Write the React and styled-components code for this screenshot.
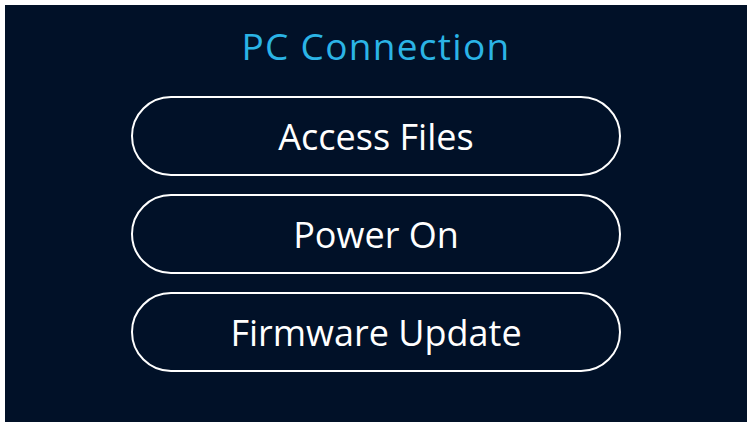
import styled, { createGlobalStyle } from "styled-components";

const GlobalStyle = createGlobalStyle`
  html, body {
    margin: 0;
    padding: 0;
    background: #ffffff;
  }
`;

const Page = styled.div`
  width: 754px;
  height: 428px;
  padding: 5px 7px 6px 5px;
  box-sizing: border-box;
`;

const Screen = styled.section`
  height: 100%;
  background: #011128;
  display: flex;
  flex-direction: column;
  align-items: center;
  font-family: "Open Sans", "Noto Sans", sans-serif;
`;

const Title = styled.h1`
  margin: 19px 0 0;
  color: #2bb4e6;
  font-weight: 400;
  font-size: 37px;
  line-height: 44px;
  letter-spacing: 1.3px;
`;

const Menu = styled.div`
  display: flex;
  flex-direction: column;
  gap: 18px;
  margin-top: 28px;
`;

const MenuButton = styled.button`
  width: 490px;
  height: 80px;
  box-sizing: border-box;
  border: 2px solid #ffffff;
  border-radius: 40px;
  background: transparent;
  color: #ffffff;
  font-family: inherit;
  font-size: 36px;
  font-weight: 400;
  cursor: pointer;
`;

const items = ["Access Files", "Power On", "Firmware Update"];

export default function App() {
  return (
    <>
      <GlobalStyle />
      <Page>
        <Screen>
          <Title>PC Connection</Title>
          <Menu>
            {items.map((label) => (
              <MenuButton key={label}>{label}</MenuButton>
            ))}
          </Menu>
        </Screen>
      </Page>
    </>
  );
}
